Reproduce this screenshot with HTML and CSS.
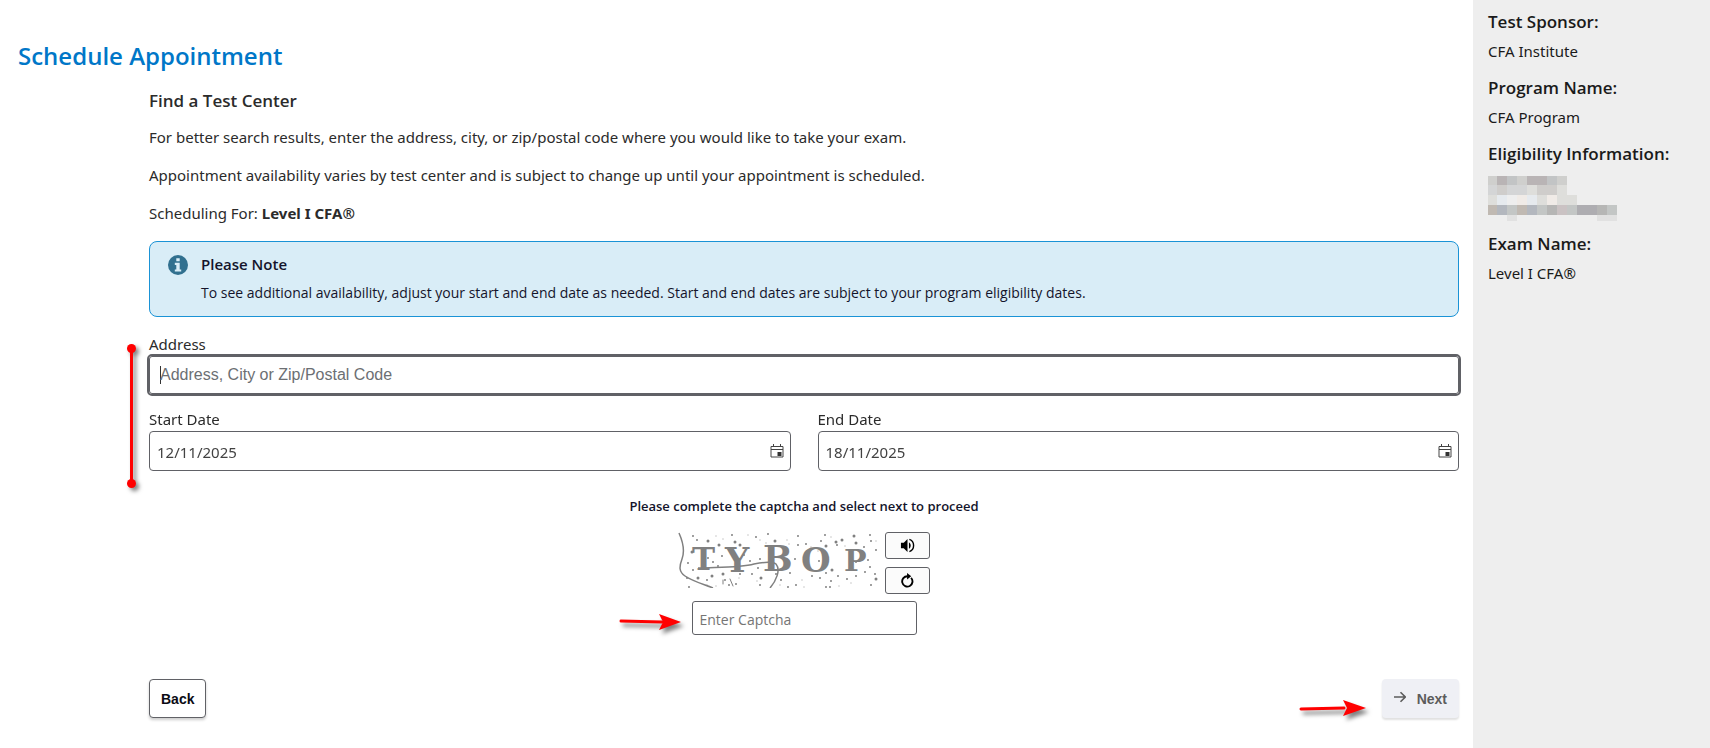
FILE: index.html
```html
<!DOCTYPE html>
<html lang="en">
<head>
    <meta charset="UTF-8">
    <meta name="viewport" content="width=device-width, initial-scale=1.0">
    <title>Schedule Appointment</title>
    <link rel="stylesheet" href="styles.css">
</head>
<body>
<div class="page">
    <main class="main">
        <h1>Schedule Appointment</h1>

        <form class="content" onsubmit="return false;">
            <h2>Find a Test Center</h2>
            <p>For better search results, enter the address, city, or zip/postal code where you would like to take your exam.</p>
            <p>Appointment availability varies by test center and is subject to change up until your appointment is scheduled.</p>
            <p>Scheduling For: <strong>Level I CFA®</strong></p>

            <div class="note">
                <svg class="note-icon" viewBox="0 0 20 20" aria-hidden="true">
                    <circle cx="10" cy="10" r="10" fill="#31708f"/>
                    <path d="M8.3 3.2h3.4v3H8.3zM6.8 7.8h4.9v6.6h1.5v2.2H6.8v-2.2h1.5V10H6.8z" fill="#d9edf7"/>
                </svg>
                <div>
                    <h3>Please Note</h3>
                    <div class="note-text">To see additional availability, adjust your start and end date as needed. Start and end dates are subject to your program eligibility dates.</div>
                </div>
            </div>

            <div class="fields">
                <div class="field">
                    <label for="address">Address</label>
                    <input type="text" id="address" class="address" placeholder="Address, City or Zip/Postal Code" autofocus>
                </div>
                <div class="dates">
                    <div class="field">
                        <label for="startDate">Start Date</label>
                        <div class="date-box">
                            <input type="text" id="startDate" value="12/11/2025">
                            <button type="button" class="calendar" aria-label="Choose start date">
                                <svg viewBox="0 0 14 14"><path d="M1 2.5h12v10.500H1zM1 5.500h12M3.500 0v3M10.500 0v3" fill="none" stroke="#444"/><path d="M7.500 8h4v4h-4z" fill="#333"/></svg>
                            </button>
                        </div>
                    </div>
                    <div class="field">
                        <label for="endDate">End Date</label>
                        <div class="date-box">
                            <input type="text" id="endDate" value="18/11/2025">
                            <button type="button" class="calendar" aria-label="Choose end date">
                                <svg viewBox="0 0 14 14"><path d="M1 2.5h12v10.500H1zM1 5.500h12M3.500 0v3M10.500 0v3" fill="none" stroke="#444"/><path d="M7.500 8h4v4h-4z" fill="#333"/></svg>
                            </button>
                        </div>
                    </div>
                </div>
                <!-- red bracket next to the fields -->
                <div class="marker"></div>
            </div>

            <div class="captcha">
                <label for="captcha">Please complete the captcha and select next to proceed</label>
                <div class="captcha-row">
                    <svg class="captcha-image" viewBox="0 0 200 56" role="img" aria-label="Captcha">
                        <g fill="none" stroke="#808080" stroke-width="1.500">
                            <path d="M1 1C5 10 7 19 4 27C1 35 1 40 7 44C14 49 25 52 35 56"/>
                            <path d="M20 36C38 35 62 36 76 32C86 30 94 29 98 32C103 38 98 49 92 56"/>
                        </g>
                        <g class="captcha-letters">
                            <text x="14" y="38" font-size="31">T</text>
                            <text x="47" y="40" font-size="34">Y</text>
                            <text x="85" y="39" font-size="35">B</text>
                            <text x="123" y="40" font-size="34">O</text>
                            <text x="166" y="39" font-size="30">P</text>
                        </g>
                        <g fill="none" stroke="#808080" stroke-linecap="round">
                            <path stroke-width="3" d="M30 9h0M41 13h0M62 13h0M57 10h0M97 9h0M158 10h0M164 8h0M178 11h0M14 20h0M20 46h0M45 42h0M83 46h0M154 38h0M198 47h0M176 4h0M148 14h0M34 44h0"/>
                            <path stroke-width="2" d="M15 4h0M19 8h0M54 3h0M78 5h0M90 2h0M98 14h0M120 4h0M120 13h0M128 12h0M147 3h0M143 9h0M159 13h0M186 15h0M193 9h0M198 18h0M192 3h0M10 31h0M15 38h0M30 26h0M35 30h0M44 24h0M47 48h0M51 53h0M58 52h0M29 48h0M9 46h0M72 29h0M82 27h0M80 36h0M74 42h0M82 53h0M112 41h0M103 48h0M118 53h0M110 55h0M134 44h0M142 46h0M148 41h0M153 49h0M160 44h0M169 47h0M178 44h0M187 40h0M192 35h0M197 42h0M193 53h0M148 55h0M152 55h0M11 55h0M178 30h0M190 28h0M130 25h0M141 29h0M117 27h0M70 16h0M66 23h0M58 29h0M25 17h0M40 34h0M62 42h0M98 42h0"/>
                            <path stroke-width="1" d="M38 4h0M45 7h0M70 3h0M82 8h0M88 11h0M109 8h0M111 12h0M133 15h0M153 5h0M167 14h0M198 9h0M29 53h0M38 54h0M61 46h0M79 49h0M102 53h0M124 48h0M126 55h0M161 54h0M173 51h0M180 19h0M140 19h0M45 52v-4M52 47l3 7"/>
                        </g>
                    </svg>
                    <div class="captcha-buttons">
                        <button type="button" aria-label="Play audio captcha">
                            <svg viewBox="0 0 16 16"><path d="M1 5h3l4-4v14l-4-4H1z" fill="#000"/><path d="M9.500 4.500C12 6 12 10 9.500 11.500z" fill="#000"/><path d="M10 1.500C16 3.500 16 12.500 10 14.500" fill="none" stroke="#000" stroke-width="1.500"/></svg>
                        </button>
                        <button type="button" aria-label="Reload captcha">
                            <svg viewBox="0 0 16 16"><path d="M11.800 5.200A5.500 5.500 0 1 1 8 3.500" fill="none" stroke="#000" stroke-width="2"/><path d="M7.500 0v7l4.500-3.500z" fill="#000"/></svg>
                        </button>
                    </div>
                </div>
                <div class="captcha-entry">
                    <input type="text" id="captcha" placeholder="Enter Captcha">
                    <svg class="arrow" viewBox="0 0 66 18" aria-hidden="true"><path d="M5 8L46 9" stroke="#f00" stroke-width="3" stroke-linecap="round"/><path d="M65 9L43 1L47 9L43 17z" fill="#f00"/></svg>
                </div>
            </div>

            <div class="actions">
                <button type="button" class="back" onclick="history.back();">Back</button>
                <div class="next-box">
                    <svg class="arrow" viewBox="0 0 66 18" aria-hidden="true"><path d="M1 10L44 9" stroke="#f00" stroke-width="3" stroke-linecap="round"/><path d="M66 9L43 1L47 9L43 17z" fill="#f00"/></svg>
                    <button type="submit" class="next" disabled>
                        <svg viewBox="0 0 12 12" aria-hidden="true"><path d="M0 6h11M6.500 1.200L11.300 6L6.500 10.800" fill="none" stroke="#5c5c5c" stroke-width="1.600"/></svg>
                        Next
                    </button>
                </div>
            </div>
        </form>
    </main>

    <aside class="sidebar">
        <dl>
            <dt>Test Sponsor:</dt>
            <dd>CFA Institute</dd>
            <dt>Program Name:</dt>
            <dd>CFA Program</dd>
            <dt>Eligibility Information:</dt>
            <dd>
                <!-- masked candidate details -->
                <svg class="masked" viewBox="0 0 129 45" shape-rendering="crispEdges" role="img" aria-label="Hidden">
                    <path fill="#cfcfcd" d="M0 0h9v9H0zM29 0h10v9H29zM69 0h10v9H69z"/>
                    <path fill="#b9b4b5" d="M9 0h10v9H9zM39 0h20v9H39z"/>
                    <path fill="#c2c4c5" d="M19 0h10v9H19zM59 0h10v9H59z"/>
                    <path fill="#d4d5d6" d="M0 9h9v10H0zM19 9h20v10H19z"/>
                    <path fill="#cfcdcb" d="M9 9h10v10H9zM49 9h20v10H49z"/>
                    <path fill="#dededb" d="M39 9h10v10H39zM69 9h10v10H69zM0 19h9v10H0zM49 19h10v10H49zM69 19h20v10H69z"/>
                    <path fill="#e6eaee" d="M9 19h10v10H9zM39 19h10v10H39z"/>
                    <path fill="#f0ebe7" d="M29 19h10v10H29zM59 19h10v10H59z"/>
                    <path fill="#c0b9b2" d="M0 29h9v10H0zM29 29h10v10H29z"/>
                    <path fill="#b3b7be" d="M9 29h10v10H9zM39 29h10v10H39z"/>
                    <path fill="#c3c6c5" d="M19 29h10v10H19zM49 29h10v10H49zM79 29h10v10H79zM119 29h10v10h-10z"/>
                    <path fill="#b6b6b5" d="M59 29h10v10H59zM109 29h10v10h-10z"/>
                    <path fill="#cac2c3" d="M69 29h10v10H69z"/>
                    <path fill="#aeadb1" d="M89 29h20v10H89z"/>
                    <path fill="#e1e1e1" d="M19 39h10v6H19zM109 39h20v6h-20z"/>
                </svg>
            </dd>
            <dt>Exam Name:</dt>
            <dd>Level I CFA®</dd>
        </dl>
    </aside>
</div>
</body>
</html>
```
FILE: styles.css
```css
* {
    box-sizing: border-box;
}

body {
    margin: 0;
    background-color: #fff;
    color: #2b2b2b;
    font-family: "Noto Sans", sans-serif;
    font-size: 15px;
    line-height: 24px;
}

h1, h2, h3, p, dl, dd {
    margin: 0;
}

h1, h2, dt {
    font-family: "Open Sans", sans-serif;
    font-weight: 600;
}

button, input {
    font-family: inherit;
}

.page {
    display: flex;
    min-height: 100vh;
}

/* main column */
.main {
    flex: 1;
    padding: 38px 14px 28px 18px;
}

h1 {
    color: #0077c8;
    font-size: 24px;
    line-height: 36px;
}

.content {
    margin-left: 131px;
    padding-top: 15px;
}

h2 {
    margin-bottom: 12px;
    font-size: 17px;
    line-height: 24px;
}

.content p {
    margin-bottom: 14px;
}

.note {
    display: flex;
    gap: 13px;
    margin: 16px 0 15px;
    padding: 10px 19px 11px 18px;
    border: 1px solid #1a93d6;
    border-radius: 8px;
    background-color: #d9edf7;
    color: #14142b;
    font-family: "Open Sans", sans-serif;
}

.note-icon {
    width: 20px;
    height: 20px;
    margin-top: 3px;
}

h3 {
    margin-bottom: 5px;
    font-size: 15px;
    font-weight: 600;
    line-height: 24px;
}

.note-text {
    font-size: 14px;
}

/* search fields */
.fields {
    position: relative;
    display: flex;
    flex-direction: column;
    gap: 13px;
}

.field {
    display: flex;
    flex: 1;
    flex-direction: column;
}

.dates {
    display: flex;
    gap: 27px;
}

.address {
    height: 38px;
    padding: 0 10px;
    border: 1px solid #606166;
    border-radius: 3px;
    outline: 2px solid #606166;
    font-family: "Liberation Sans", Arial, sans-serif;
    font-size: 16px;
    caret-color: transparent;
}

.address::placeholder {
    color: #6c6f73;
}

/* steady caret while the box is empty */
.address:placeholder-shown {
    background: linear-gradient(#333, #333) 10px center / 1px 18px no-repeat;
}

.date-box {
    display: flex;
    align-items: center;
    height: 40px;
    padding: 0 6px 0 7px;
    border: 1px solid #606166;
    border-radius: 4px;
}

.date-box input {
    flex: 1;
    height: 36px;
    padding: 2px 0 0;
    border: none;
    background: none;
    color: #424242;
    font-size: 15px;
}

.calendar {
    display: flex;
    padding: 0;
    border: none;
    background: none;
    cursor: pointer;
}

.calendar svg {
    width: 14px;
    height: 14px;
}

.marker {
    position: absolute;
    top: 16px;
    bottom: -13px;
    left: -19px;
    width: 3px;
    background-color: #f00;
    filter: drop-shadow(3px 3px 2px rgba(0, 0, 0, 0.5));
}

.marker::before,
.marker::after {
    content: "";
    position: absolute;
    left: -3px;
    width: 9px;
    height: 9px;
    border-radius: 50%;
    background-color: #f00;
}

.marker::before {
    top: -4px;
}

.marker::after {
    bottom: -4px;
}

/* captcha */
.captcha {
    display: flex;
    flex-direction: column;
    align-items: center;
    padding-top: 23px;
    font-family: "Open Sans", sans-serif;
}

.captcha label {
    color: #14142b;
    font-size: 13px;
    font-weight: 600;
}

.captcha-row {
    display: flex;
    gap: 7px;
    margin-top: 14px;
}

.captcha-image {
    width: 200px;
    height: 56px;
}

.captcha-letters {
    fill: #808080;
    font-family: "DejaVu Serif", serif;
    font-weight: bold;
}

.captcha-buttons {
    display: flex;
    flex-direction: column;
    gap: 8px;
}

.captcha-buttons button {
    display: flex;
    align-items: center;
    justify-content: center;
    width: 45px;
    height: 27px;
    padding: 0;
    border: 1px solid #606166;
    border-radius: 3px;
    background-color: #fbfbfb;
    cursor: pointer;
}

.captcha-buttons svg {
    width: 15px;
    height: 15px;
}

.captcha-entry {
    position: relative;
    margin-top: 7px;
}

.captcha-entry input {
    display: block;
    width: 225px;
    height: 34px;
    padding: 2px 7px 0;
    border: 1px solid #606166;
    border-radius: 3px;
    font-size: 14px;
}

.captcha-entry input::placeholder {
    color: #757575;
}

.arrow {
    width: 66px;
    height: 18px;
    overflow: visible;
    filter: drop-shadow(3px 4px 2px rgba(0, 0, 0, 0.5));
}

.captcha-entry .arrow {
    position: absolute;
    top: 12px;
    right: 235px;
}

/* bottom buttons */
.actions {
    display: flex;
    justify-content: space-between;
    margin-top: 44px;
    font-family: "Liberation Sans", Arial, sans-serif;
}

.back,
.next {
    height: 39px;
    border-radius: 4px;
    font-size: 14px;
    font-weight: bold;
}

.back {
    padding: 0 11px;
    border: 1px solid #606166;
    background-color: #fff;
    color: #0b0b14;
    box-shadow: 0 2px 3px rgba(0, 0, 0, 0.2);
    cursor: pointer;
}

.next-box {
    display: flex;
    align-items: center;
    gap: 16px;
}

.next-box .arrow {
    margin-top: 19px;
}

.next {
    display: flex;
    align-items: center;
    gap: 11px;
    padding: 0 12px;
    border: none;
    background-color: #eff0f5;
    color: #5c5c5c;
    box-shadow: 0 2px 2px rgba(0, 0, 0, 0.12);
}

.next svg {
    width: 12px;
    height: 12px;
    margin-bottom: 4px;
}

/* appointment summary */
.sidebar {
    width: 237px;
    padding: 10px 15px;
    background-color: #eee;
    color: #1a1a1a;
}

dt {
    margin-bottom: 5px;
    font-size: 17px;
}

dd {
    margin-bottom: 13px;
}

.masked {
    display: block;
    width: 129px;
    height: 45px;
    margin-top: 10px;
    margin-bottom: -2px;
}
```
